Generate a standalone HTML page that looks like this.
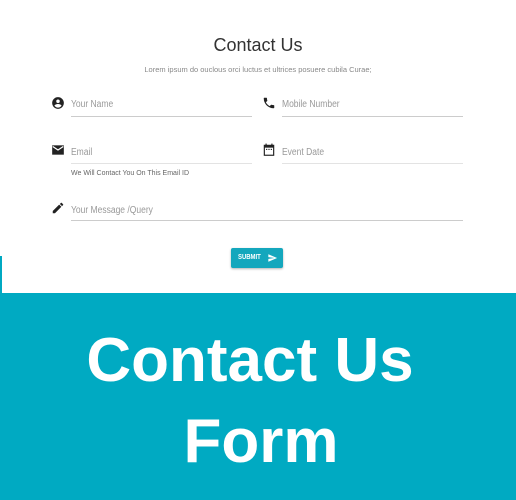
<!DOCTYPE html>
<html><head><style>
body{margin:0;width:516px;height:500px;position:relative;background:#fff;font-family:"Liberation Sans",sans-serif;overflow:hidden}
.a{position:absolute}
.t{font-size:10px;color:#999;transform:scaleX(.85);transform-origin:left}
.ln{height:1px;background:#ccc}
.big{color:#fff;font-weight:bold;font-size:62px;width:516px;text-align:center;left:-8px;line-height:1}
</style></head><body>
<div class="a" style="left:0;top:35px;width:516px;text-align:center;font-size:18px;color:#333">Contact Us</div>
<div class="a" style="left:0;top:65px;width:516px;text-align:center;font-size:7.5px;color:#888">Lorem ipsum do ouclous orci luctus et ultrices posuere cubila Curae;</div>

<svg class="a" style="left:51px;top:96px" width="14" height="14" viewBox="0 0 24 24"><path d="M12 2a10 10 0 1 0 0 20 10 10 0 0 0 0-20zm0 4a3 3 0 1 1 0 6 3 3 0 0 1 0-6zm0 14a7.5 7.5 0 0 1-6-3.2c0-2 4-3.1 6-3.1s6 1.1 6 3.1A7.5 7.5 0 0 1 12 20z" fill="#222"/></svg>
<div class="a t" style="left:71px;top:99px">Your Name</div>
<div class="a ln" style="left:71px;top:116px;width:181px"></div>

<svg class="a" style="left:262px;top:96px" width="14" height="14" viewBox="0 0 24 24"><path d="M6.6 10.8a15 15 0 0 0 6.6 6.6l2.2-2.2c.3-.3.7-.4 1-.2 1.1.4 2.3.6 3.6.6.6 0 1 .4 1 1V20c0 .6-.4 1-1 1A17 17 0 0 1 3 4c0-.6.4-1 1-1h3.5c.6 0 1 .4 1 1 0 1.3.2 2.5.6 3.6.1.3 0 .7-.2 1z" fill="#222"/></svg>
<div class="a t" style="left:282px;top:99px">Mobile Number</div>
<div class="a ln" style="left:282px;top:116px;width:181px"></div>

<svg class="a" style="left:51px;top:143px" width="14" height="14" viewBox="0 0 24 24"><path d="M2 4h20v16H2z" fill="#222"/><path d="M3 6l9 6 9-6" stroke="#fff" stroke-width="2" fill="none"/></svg>
<div class="a t" style="left:71px;top:147px">Email</div>
<div class="a ln" style="left:71px;top:163px;width:181px;background:#e3e3e3"></div>
<div class="a" style="left:71px;top:170px;font-size:7px;color:#666">We Will Contact You On This Email ID</div>

<svg class="a" style="left:262px;top:142px" width="14" height="16" viewBox="0 0 24 24"><path d="M3 3h18v19H3z" fill="#222"/><rect x="5" y="8" width="14" height="12" fill="#fff"/><rect x="6" y="1" width="2" height="4" fill="#222"/><rect x="16" y="1" width="2" height="4" fill="#222"/><rect x="7" y="10" width="2" height="2" fill="#222"/><rect x="11" y="10" width="2" height="2" fill="#222"/><rect x="15" y="10" width="2" height="2" fill="#222"/></svg>
<div class="a t" style="left:282px;top:147px">Event Date</div>
<div class="a ln" style="left:282px;top:163px;width:181px;background:#e3e3e3"></div>

<svg class="a" style="left:51px;top:201px" width="14" height="14" viewBox="0 0 24 24"><path d="M3 17.2V21h3.8L17.8 9.9 14 6.2zM20.7 7c.4-.4.4-1 0-1.4l-2.3-2.3c-.4-.4-1-.4-1.4 0l-1.8 1.8 3.7 3.7z" fill="#222"/></svg>
<div class="a t" style="left:71px;top:205px">Your Message /Query</div>
<div class="a ln" style="left:71px;top:220px;width:392px"></div>

<div class="a" style="left:231px;top:248px;width:52px;height:20px;background:#14a7bd;box-shadow:0 1px 2px rgba(0,0,0,.3);border-radius:2px"></div>
<div class="a" style="left:238px;top:254px;font-size:7px;color:#fff;font-weight:bold;transform:scaleX(.85);transform-origin:left">SUBMIT</div>
<svg class="a" style="left:267px;top:253px" width="11" height="10" viewBox="0 0 24 24"><path d="M2 21l21-9L2 3v7l15 2-15 2z" fill="#fff"/></svg>

<div class="a" style="left:0;top:256px;width:2px;height:40px;background:#00a9c2"></div>
<div class="a" style="left:0;top:293px;width:516px;height:207px;background:#00aac2"></div>
<div class="a big" style="top:330px">Contact Us</div>
<div class="a big" style="top:411px;left:3px">Form</div>
</body></html>
